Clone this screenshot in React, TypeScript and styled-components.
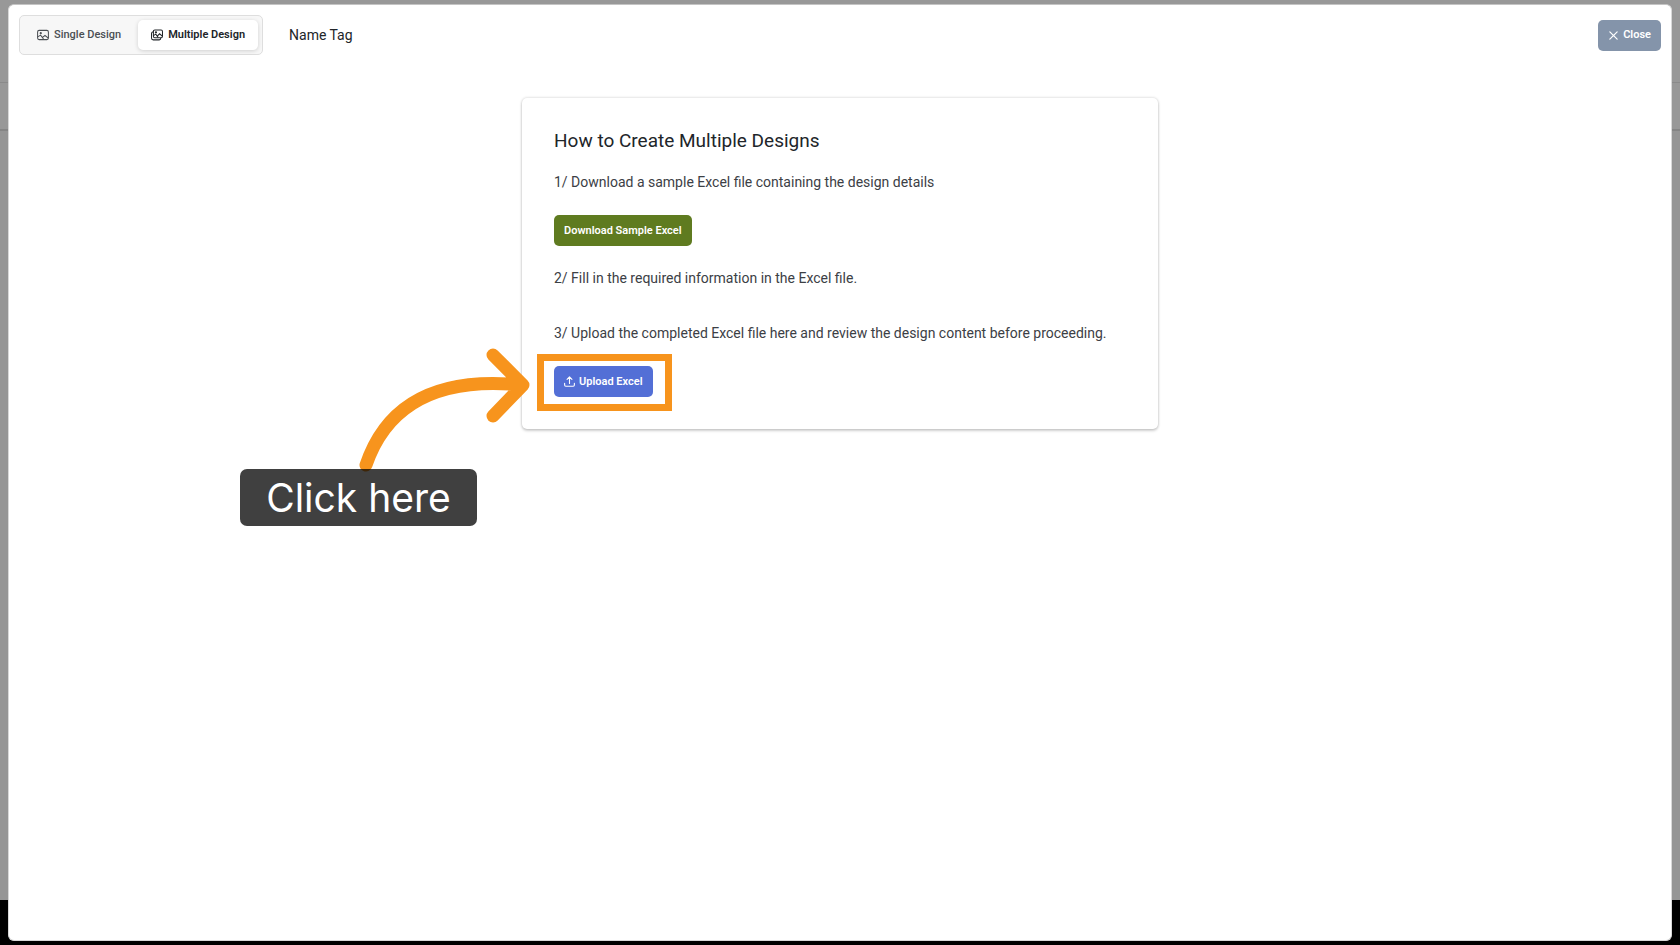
import React from "react";
import styled, { createGlobalStyle, css } from "styled-components";

const GlobalStyle = createGlobalStyle`
  *, *::before, *::after { box-sizing: border-box; }
  body {
    margin: 0;
    background: #989898;
    color: #212529;
    font-family: Roboto, "Liberation Sans", sans-serif;
  }
  h1, h2, p { margin: 0; }
`;

const Page = styled.div`
  position: relative;
  display: flex;
  min-height: 100vh;
  padding: 4px 8px;
`;

const Backdrop = styled.div`
  position: absolute;
  inset: 0;
  display: flex;
  flex-direction: column;
`;

const BackdropBand = styled.div`
  flex: none;
  height: 83px;
  border-bottom: 1px solid #8a8a8a;
`;

const BackdropNav = styled.div`
  flex: none;
  height: 48px;
  border-bottom: 2px solid #858585;
`;

const BackdropBody = styled.div`
  flex: 1;
  background: #959595;
`;

const BackdropFooter = styled.div`
  flex: none;
  height: 45px;
  background: #000;
`;

const Dialog = styled.main`
  position: relative;
  flex: 1;
  min-width: 0;
  padding: 10px;
  border: 1px solid #d8d8d8;
  border-top-color: #c4c4c4;
  border-radius: 6px;
  background: #fff;
`;

const TopBar = styled.header`
  display: flex;
  align-items: center;
`;

const Tabs = styled.div`
  display: flex;
  gap: 4px;
  margin-right: 26px;
  padding: 4px;
  border: 1px solid #dedede;
  border-radius: 5px;
  background: #f7f7f7;
`;

const Tab = styled.button<{ $active?: boolean }>`
  display: flex;
  align-items: center;
  gap: 5px;
  height: 30px;
  padding: 0 13px;
  border: 0;
  border-radius: 5px;
  background: transparent;
  color: #4b4f54;
  font: 500 11px/16px Roboto, "Liberation Sans", sans-serif;
  cursor: pointer;
  ${(p) =>
    p.$active &&
    css`
      background: #fff;
      color: #212529;
      font-weight: 600;
      box-shadow: 0 1px 4px rgba(0, 0, 0, 0.16);
    `}
`;

const ProductName = styled.h1`
  flex: 1;
  font-size: 14px;
  line-height: 24px;
  font-weight: 400;
`;

const ActionButton = styled.button<{ $tone: string }>`
  display: flex;
  align-items: center;
  gap: 4px;
  height: 31px;
  padding: 0 10px;
  border: 0;
  border-radius: 5px;
  background: ${(p) => p.$tone};
  color: #fff;
  font: 600 11px/16px Roboto, "Liberation Sans", sans-serif;
  cursor: pointer;
`;

const Card = styled.section`
  position: relative;
  display: flex;
  flex-direction: column;
  align-items: flex-start;
  width: 636px;
  max-width: 100%;
  margin: 43px auto 0;
  padding: 31px 32px 32px;
  border-radius: 5px;
  background: #fff;
  box-shadow: 0 0 3px rgba(0, 0, 0, 0.2), 0 2px 3px rgba(0, 0, 0, 0.16);
`;

const CardTitle = styled.h2`
  margin-bottom: 17px;
  font-size: 19px;
  line-height: 24px;
  font-weight: 400;
`;

const Step = styled.div<{ $spacing?: number }>`
  display: flex;
  flex-direction: column;
  align-items: flex-start;
  gap: 21px;
  margin-bottom: ${(p) => p.$spacing ?? 0}px;
`;

const StepText = styled.p`
  color: #3c4045;
  font-size: 14px;
  line-height: 24px;
`;

const UploadArea = styled.div`
  position: relative;
`;

const Highlight = styled.div`
  position: absolute;
  inset: -12px -19px -14px -17px;
  border: 7px solid #f7941d;
  pointer-events: none;
`;

const Arrow = styled.svg`
  position: absolute;
  left: -194px;
  top: -18px;
  overflow: visible;
  pointer-events: none;
`;

const Callout = styled.div`
  position: absolute;
  left: -314px;
  top: 103px;
  width: 237px;
  border-radius: 7px;
  background: rgba(0, 0, 0, 0.75);
  color: #fff;
  font: 400 39px/57px Inter, "Liberation Sans", sans-serif;
  text-align: center;
  white-space: nowrap;
`;

const ImageIcon = () => (
  <svg width="12" height="12" viewBox="0 0 14 14" fill="none" stroke="currentColor" strokeWidth="1.2" aria-hidden="true">
    <rect x="0.7" y="1.6" width="12.6" height="10.8" rx="1.8" />
    <circle cx="4.4" cy="4.9" r="0.7" />
    <path d="M0.8 9.2 4.2 7.2l3.4 4.4M6.4 9.8l2.9-2.2 4 3" />
  </svg>
);

const ImagesIcon = () => (
  <svg width="12" height="12" viewBox="0 0 14 14" fill="none" stroke="currentColor" strokeWidth="1.2" aria-hidden="true">
    <rect x="2.8" y="1.2" width="10.6" height="9" rx="1.6" />
    <circle cx="5.8" cy="3.9" r="0.7" />
    <path d="M2.8 7.8 5.6 6l2.8 4M7.6 8l2.4-2.4 3.2 2.8" />
    <path d="M2.6 3.2C1.2 3.4.6 4 .6 5.2v5.4c0 1.4.6 2.1 2 2.1h7c1.2 0 1.8-.7 1.8-2.2" />
  </svg>
);

const CloseIcon = () => (
  <svg width="11" height="11" viewBox="0 0 12 12" fill="none" stroke="currentColor" strokeWidth="1.3" strokeLinecap="round" aria-hidden="true">
    <path d="M2 2l8 8M10 2l-8 8" />
  </svg>
);

const UploadIcon = () => (
  <svg width="11" height="11" viewBox="0 0 14 14" fill="none" stroke="currentColor" strokeWidth="1.4" strokeLinecap="round" strokeLinejoin="round" aria-hidden="true">
    <path d="M7 9.4V1.2M3.9 4.2 7 1.1l3.1 3.1M.8 9.2v2.3c0 .9.6 1.6 1.5 1.6h9.4c.9 0 1.5-.7 1.5-1.6V9.2" />
  </svg>
);

export default function App() {
  return (
    <>
      <GlobalStyle />
      <Page>
        <Backdrop aria-hidden="true">
          <BackdropBand />
          <BackdropNav />
          <BackdropBody />
          <BackdropFooter />
        </Backdrop>
        <Dialog>
          <TopBar>
            <Tabs>
              <Tab type="button"><ImageIcon />Single Design</Tab>
              <Tab type="button" $active><ImagesIcon />Multiple Design</Tab>
            </Tabs>
            <ProductName>Name Tag</ProductName>
            <ActionButton type="button" $tone="#8494aa"><CloseIcon />Close</ActionButton>
          </TopBar>
          <Card>
            <CardTitle>How to Create Multiple Designs</CardTitle>
            <Step $spacing={20}>
              <StepText>1/ Download a sample Excel file containing the design details</StepText>
              <ActionButton type="button" $tone="#5f7b20">Download Sample Excel</ActionButton>
            </Step>
            <Step $spacing={31}>
              <StepText>2/ Fill in the required information in the Excel file.</StepText>
            </Step>
            <Step>
              <StepText>3/ Upload the completed Excel file here and review the design content before proceeding.</StepText>
              <UploadArea>
                <ActionButton type="button" $tone="#536fd6"><UploadIcon />Upload Excel</ActionButton>
                <Highlight />
                <Arrow width="170" height="124" viewBox="0 0 170 124" fill="none" stroke="#f7941d" strokeWidth="13" strokeLinecap="round" strokeLinejoin="round">
                  <path d="M6 117C26 58 75 28 162 37M133 7l30 30-30 31" />
                </Arrow>
                <Callout>Click here</Callout>
              </UploadArea>
            </Step>
          </Card>
        </Dialog>
      </Page>
    </>
  );
}
